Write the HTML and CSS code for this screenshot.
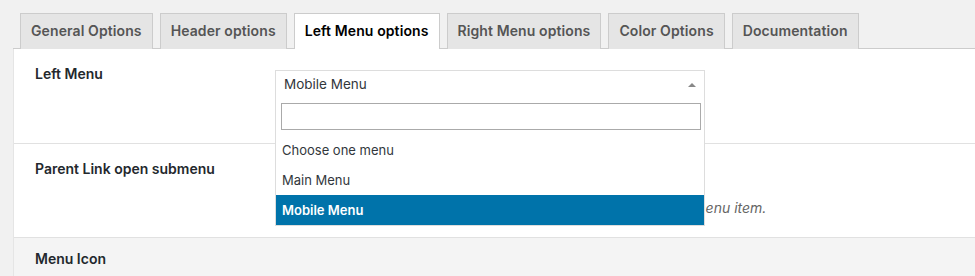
FILE: index.html
```html
<!DOCTYPE html>
<html>
<head>
  <meta charset="UTF-8">
  <title>Menu options</title>
  <link rel="stylesheet" href="styles.css">
</head>
<body>

<div class="wrap">

  <h2 class="nav-tab-wrapper">
    <a href="#" class="nav-tab">General Options</a>
    <a href="#" class="nav-tab">Header options</a>
    <a href="#" class="nav-tab nav-tab-active">Left Menu options</a>
    <a href="#" class="nav-tab">Right Menu options</a>
    <a href="#" class="nav-tab">Color Options</a>
    <a href="#" class="nav-tab">Documentation</a>
  </h2>

  <div class="panel">

    <div class="row">
      <div class="row-label">Left Menu</div>
      <div class="row-field">
        <div class="select2 open">
          <span class="select2-value">Mobile Menu</span>
          <span class="select2-arrow"></span>
          <div class="select2-drop">
            <div class="select2-search"><input type="text"></div>
            <ul class="select2-results">
              <li>Choose one menu</li>
              <li>Main Menu</li>
              <li class="highlighted">Mobile Menu</li>
            </ul>
          </div>
        </div>
      </div>
    </div>

    <div class="row">
      <div class="row-label">Parent Link open submenu</div>
      <div class="row-field">
        <div class="select2 small"><span class="select2-value">No</span></div>
        <p class="description">Clicking on the parent link will open its submenu instead of the menu item.</p>
      </div>
    </div>

    <div class="row row-head">
      <div class="row-label">Menu Icon</div>
    </div>

  </div>

</div>

</body>
</html>
```

FILE: styles.css
```css
body {
  font-family: Inter, "Noto Sans", sans-serif;
  margin: 0;
  padding: 0;
  background-color: #f1f1f1;
  color: #23282d;
  font-size: 14px;
  overflow: hidden;
}
.wrap {
  padding: 13px 0 0 13px;
}
.nav-tab-wrapper {
  display: flex;
  margin: 0;
  padding: 0;
  border-bottom: 1px solid #ccc;
  font-size: 14px;
  line-height: 24px;
}
.nav-tab {
  display: block;
  margin-left: 7px;
  margin-bottom: -1px;
  padding: 5px 10px;
  border: 1px solid #ccc;
  border-bottom: none;
  background: #e5e5e5;
  color: #555;
  font-weight: 600;
  letter-spacing: 0.1px;
  text-decoration: none;
  white-space: nowrap;
}
.nav-tab-active {
  background: #fff;
  color: #000;
  padding-bottom: 6px;
}
.panel {
  background: #fff;
  border-left: 1px solid #e5e5e5;
  height: 227px;
  overflow: hidden;
}
.row {
  display: flex;
  border-bottom: 1px solid #e1e1e1;
  height: 95px;
  box-sizing: border-box;
}
.row + .row {
  height: 94px;
}
.row-label {
  width: 240px;
  padding: 15px 0 0 21px;
  font-weight: 600;
  line-height: 20px;
}
.row-field {
  padding-top: 21px;
}
.row.row-head {
  height: 38px;
  background: #f4f4f4;
  border-bottom: none;
}
.row-head .row-label {
  padding-top: 11px;
}
.select2 {
  position: relative;
  width: 430px;
  height: 28px;
  box-sizing: border-box;
  border: 1px solid #ddd;
  background: #fff;
  line-height: 26px;
}
.select2-value {
  padding-left: 8px;
  color: #32373c;
  font-size: 13.5px;
}
.select2-arrow {
  position: absolute;
  right: 8px;
  top: 12px;
  border-left: 4px solid transparent;
  border-right: 4px solid transparent;
  border-bottom: 4px solid #888;
}
.select2.small {
  width: 130px;
}
.select2-drop {
  position: absolute;
  left: -1px;
  top: 26px;
  width: 430px;
  box-sizing: border-box;
  border: 1px solid #ddd;
  border-top: none;
  background: #fff;
  z-index: 10;
}
.select2-search {
  padding: 6px 3px 5px 5px;
}
.select2-search input {
  display: block;
  width: 100%;
  height: 27px;
  box-sizing: border-box;
  border: 1px solid #aaa;
  margin: 0;
}
.select2-results {
  list-style: none;
  margin: 0;
  padding: 0;
}
.select2-results li {
  height: 30px;
  line-height: 30px;
  padding-left: 6px;
  font-size: 13px;
  color: #32373c;
}
.select2-results li.highlighted {
  background: #0073aa;
  color: #fff;
  font-weight: 600;
}
.description {
  margin: 6px 0 0;
  font-style: italic;
  color: #666;
  font-size: 14px;
}
```
